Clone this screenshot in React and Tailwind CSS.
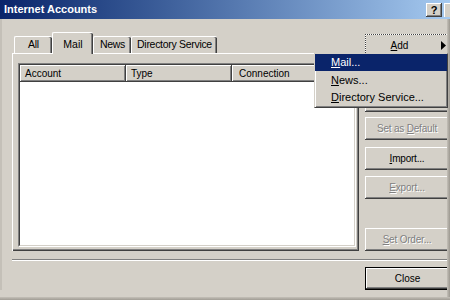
import React from "react";

const FONT = { fontFamily: '"Liberation Sans", Arial, sans-serif' };

// classic raised 3D edge
const RAISED =
  "shadow-[inset_-1px_-1px_#404040,inset_1px_1px_#ffffff,inset_-2px_-2px_#808080,inset_2px_2px_#d4d0c8]";

function Key({ children }) {
  return <span className="underline underline-offset-[1px]">{children}</span>;
}

function SideButton({ children, disabled, className = "" }) {
  return (
    <div
      className={`flex h-[23px] w-[84px] items-center justify-center bg-[#d4d0c8] text-[10px] tracking-[-0.2px] ${RAISED} ${
        disabled ? "text-[#808080] [text-shadow:1px_1px_#ffffff]" : "text-black"
      } ${className}`}
    >
      {children && <span className="whitespace-pre">{children}</span>}
    </div>
  );
}

function Tab({ label, active, className = "" }) {
  if (active) {
    return (
      <div
        className={`relative z-10 -mb-px flex h-[22px] w-[41px] items-start justify-center rounded-t-[2px] border-l border-t border-white bg-[#d4d0c8] pt-[4px] text-[10.5px] text-black shadow-[inset_-1px_0_#404040,inset_-2px_0_#808080] ${className}`}
      >
        {label}
      </div>
    );
  }
  return (
    <div
      className={`mt-[4px] flex h-[17px] items-center justify-center whitespace-nowrap rounded-t-[2px] border-l border-t border-white bg-[#d4d0c8] text-[10.5px] tracking-[-0.3px] text-black shadow-[inset_-1px_0_#404040,inset_-2px_0_#808080] ${className}`}
    >
      {label}
    </div>
  );
}

function HeaderCell({ children, className = "" }) {
  return (
    <div
      className={`flex h-[17px] shrink-0 items-center bg-[#d4d0c8] pl-[5px] text-[10px] text-black shadow-[inset_-1px_-1px_#404040,inset_1px_1px_#ffffff,inset_-2px_-2px_#808080] ${className}`}
    >
      {children}
    </div>
  );
}

export default function App() {
  return (
    <div
      className="relative h-[300px] w-[450px] overflow-hidden bg-[#d4d0c8] select-none"
      style={FONT}
    >
      {/* title bar */}
      <div className="flex h-[19px] items-center bg-gradient-to-r from-[#0a246a] to-[#a6caf0] pl-[4px]">
        <span className="text-[11px] font-bold text-white">Internet Accounts</span>
        <div className="ml-auto flex items-center gap-[2px] pt-[1px]">
          <div className={`flex h-[14px] w-[16px] items-center justify-center bg-[#d4d0c8] text-[11px] font-bold leading-none text-black ${RAISED}`}>
            ?
          </div>
          <div className="h-[14px] w-[6px] bg-[#d4d0c8] shadow-[inset_1px_1px_#ffffff,inset_2px_2px_#d4d0c8]" />
        </div>
      </div>

      {/* body */}
      <div className="flex flex-col border-l-[2px] border-[#c4c0b8]">
        <div className="mt-[13px] flex">
          {/* tabs + panel */}
          <div className="ml-[10px] flex w-[347px] flex-col">
            <div className="flex items-end pl-[2px]">
              <Tab label="All" className="w-[38px]" />
              <Tab label="Mail" active />
              <Tab label="News" className="w-[38px]" />
              <Tab label="Directory Service" className="w-[86px]" />
            </div>
            <div className="h-[198px] border-l border-t border-white shadow-[inset_-1px_-1px_#404040,inset_-2px_-2px_#808080]">
              <div className="ml-[5px] mt-[9px] h-[184px] w-[338px] border border-b-white border-l-[#808080] border-r-white border-t-[#808080]">
                <div className="flex h-full flex-col overflow-hidden border border-b-[#d4d0c8] border-l-[#404040] border-r-[#d4d0c8] border-t-[#404040] bg-white">
                  <div className="flex">
                    <HeaderCell className="w-[106px]">Account</HeaderCell>
                    <HeaderCell className="w-[106px]">Type</HeaderCell>
                    <HeaderCell className="w-[130px] pl-[7px]">Connection</HeaderCell>
                  </div>
                </div>
              </div>
            </div>
          </div>

          {/* side buttons */}
          <div className="ml-[6px] flex flex-col pt-[2px]">
            <div className="relative flex h-[23px] w-[83px] items-center justify-center bg-[#d4d0c8] text-[10px] text-black outline-1 outline-dotted outline-[#404040] -outline-offset-1 shadow-[inset_1px_1px_#ffffff]">
              <span className="pr-[14px]">
                <Key>A</Key>dd
              </span>
              <svg className="absolute right-[2px] top-[7px]" width="5" height="9" viewBox="0 0 5 9">
                <path d="M0 0 L5 4.5 L0 9 Z" fill="#000" />
              </svg>
            </div>
            {/* Remove / Properties sit under the open menu */}
            <SideButton className="mt-[5px]" />
            <SideButton className="mt-[4px]" />
            <SideButton className="mt-[5px]" disabled>
              Set as <Key>D</Key>efault
            </SideButton>
            <SideButton className="mt-[7px]">
              <Key>I</Key>mport...
            </SideButton>
            <SideButton className="mt-[6px]" disabled>
              <Key>E</Key>xport...
            </SideButton>
            <SideButton className="mt-[29px]" disabled>
              <Key>S</Key>et Order...
            </SideButton>
          </div>
        </div>

        {/* etched separator */}
        <div className="ml-[10px] mt-[8px] h-[2px] border-b border-t border-b-white border-t-[#808080]" />

        <div className="mt-[6px] flex justify-end">
          <div className="flex h-[23px] w-[85px] border border-black">
            <div className={`flex flex-1 items-center justify-center bg-[#d4d0c8] text-[10px] text-black ${RAISED}`}>
              Close
            </div>
          </div>
        </div>
      </div>

      {/* right and bottom edge shade of the window */}
      <div className="absolute right-0 top-[19px] h-[281px] w-[3px] bg-gradient-to-r from-[#c4c0b8] to-[#9c9890]" />
      <div className="absolute bottom-0 left-0 h-[3px] w-[450px] bg-gradient-to-b from-[#c4c0b8] to-[#a09c94]" />

      {/* dropped Add menu */}
      <div className="absolute left-[314px] top-[53px] flex h-[55px] w-[134px] flex-col border border-b-[#404040] border-l-[#d4d0c8] border-r-[#404040] border-t-[#d4d0c8] bg-[#d4d0c8] text-[11px] text-black shadow-[inset_1px_1px_#ffffff,inset_-1px_-1px_#808080]">
        <div className="flex h-[17px] items-center bg-[#0a246a] pl-[16px] text-white">
          <span>
            <Key>M</Key>ail...
          </span>
        </div>
        <div className="flex h-[18px] items-center pl-[16px]">
          <span>
            <Key>N</Key>ews...
          </span>
        </div>
        <div className="flex h-[17px] items-center pl-[16px]">
          <span>
            <Key>D</Key>irectory Service...
          </span>
        </div>
      </div>
    </div>
  );
}
